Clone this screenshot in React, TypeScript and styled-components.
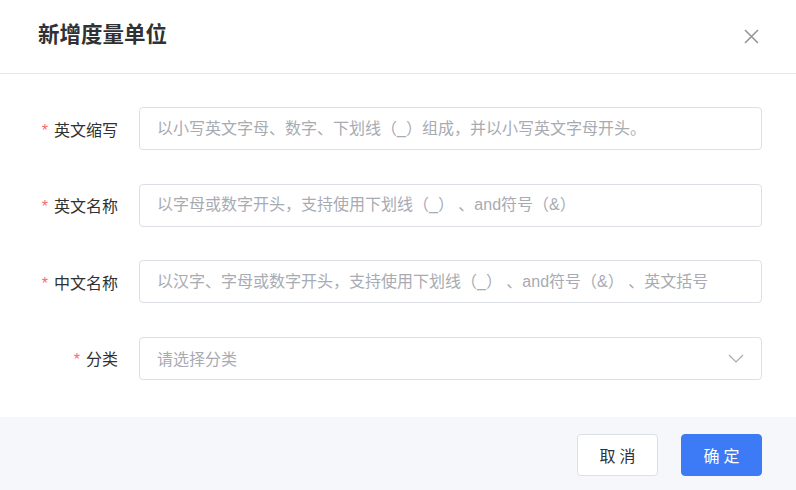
import React from "react";
import styled, { createGlobalStyle } from "styled-components";

const Global = createGlobalStyle`
  html, body { margin: 0; padding: 0; background: #ffffff; }
  body { font-family: "Liberation Sans", "Noto Sans CJK SC", sans-serif; }
  * { box-sizing: border-box; }
`;

const Dialog = styled.div`
  width: 796px;
  height: 490px;
  display: flex;
  flex-direction: column;
  background: #ffffff;
`;

const Header = styled.div`
  height: 74px;
  flex: none;
  display: flex;
  align-items: center;
  justify-content: space-between;
  padding: 0 37px 0 38px;
  border-bottom: 1px solid #e6e8ee;
`;

const Title = styled.h2`
  margin: 0;
  font-size: 21.5px;
  font-weight: 700;
  color: #303133;
  line-height: 1;
  padding-bottom: 2px;
`;

const CloseButton = styled.button`
  border: none;
  background: transparent;
  padding: 0;
  width: 16px;
  height: 16px;
  display: flex;
  align-items: center;
  justify-content: center;
  cursor: pointer;
`;

const Body = styled.div`
  flex: 1;
  display: flex;
  flex-direction: column;
  gap: 33.67px;
  padding: 33px 34px 0 38px;
`;

const Row = styled.div`
  display: flex;
  align-items: center;
  gap: 21px;
`;

const Label = styled.label`
  width: 80px;
  flex: none;
  text-align: right;
  font-size: 16px;
  color: #303133;
  white-space: nowrap;
`;

const Star = styled.span`
  color: #f56c6c;
  margin-right: 6px;
`;

const Input = styled.input`
  flex: 1;
  min-width: 0;
  height: 43px;
  border: 1px solid #dcdfe6;
  border-radius: 4px;
  padding: 0 18px 0 17px;
  font-family: inherit;
  font-size: 16px;
  color: #303133;
  outline: none;
  &::placeholder { color: #a8abb2; }
`;

const Select = styled.div`
  flex: 1;
  height: 43px;
  border: 1px solid #dcdfe6;
  border-radius: 4px;
  padding: 0 17px 0 17px;
  display: flex;
  align-items: center;
  justify-content: space-between;
  font-size: 16px;
  color: #a8abb2;
  cursor: pointer;
`;

const Footer = styled.div`
  height: 73px;
  flex: none;
  background: #f5f7fa;
  display: flex;
  justify-content: flex-end;
  align-items: flex-start;
  gap: 23px;
  padding: 17px 34px 0 0;
`;

const Button = styled.button<{ $primary?: boolean }>`
  width: 81px;
  height: 42px;
  border-radius: 4px;
  font-family: inherit;
  font-size: 16px;
  letter-spacing: 4px;
  text-indent: 4px;
  cursor: pointer;
  border: 1px solid ${(p) => (p.$primary ? "#3d7af5" : "#dcdfe6")};
  background: ${(p) => (p.$primary ? "#3d7af5" : "#ffffff")};
  color: ${(p) => (p.$primary ? "#ffffff" : "#303133")};
`;

const fields = [
  { label: "英文缩写", placeholder: "以小写英文字母、数字、下划线（_）组成，并以小写英文字母开头。" },
  { label: "英文名称", placeholder: "以字母或数字开头，支持使用下划线（_） 、and符号（&）" },
  { label: "中文名称", placeholder: "以汉字、字母或数字开头，支持使用下划线（_） 、and符号（&） 、英文括号" },
];

export default function App() {
  return (
    <>
      <Global />
      <Dialog>
        <Header>
          <Title>新增度量单位</Title>
          <CloseButton aria-label="关闭">
            <svg width="15" height="15" viewBox="0 0 15 15">
              <path d="M1 1 L14 14 M14 1 L1 14" stroke="#909399" strokeWidth="1.5" fill="none" />
            </svg>
          </CloseButton>
        </Header>
        <Body>
          {fields.map((f) => (
            <Row key={f.label}>
              <Label>
                <Star>*</Star>
                {f.label}
              </Label>
              <Input placeholder={f.placeholder} />
            </Row>
          ))}
          <Row>
            <Label>
              <Star>*</Star>
              分类
            </Label>
            <Select>
              <span>请选择分类</span>
              <svg width="16" height="9" viewBox="0 0 16 9">
                <path d="M1 1 L8 8 L15 1" stroke="#a8abb2" strokeWidth="1.2" fill="none" />
              </svg>
            </Select>
          </Row>
        </Body>
        <Footer>
          <Button>取消</Button>
          <Button $primary>确定</Button>
        </Footer>
      </Dialog>
    </>
  );
}
